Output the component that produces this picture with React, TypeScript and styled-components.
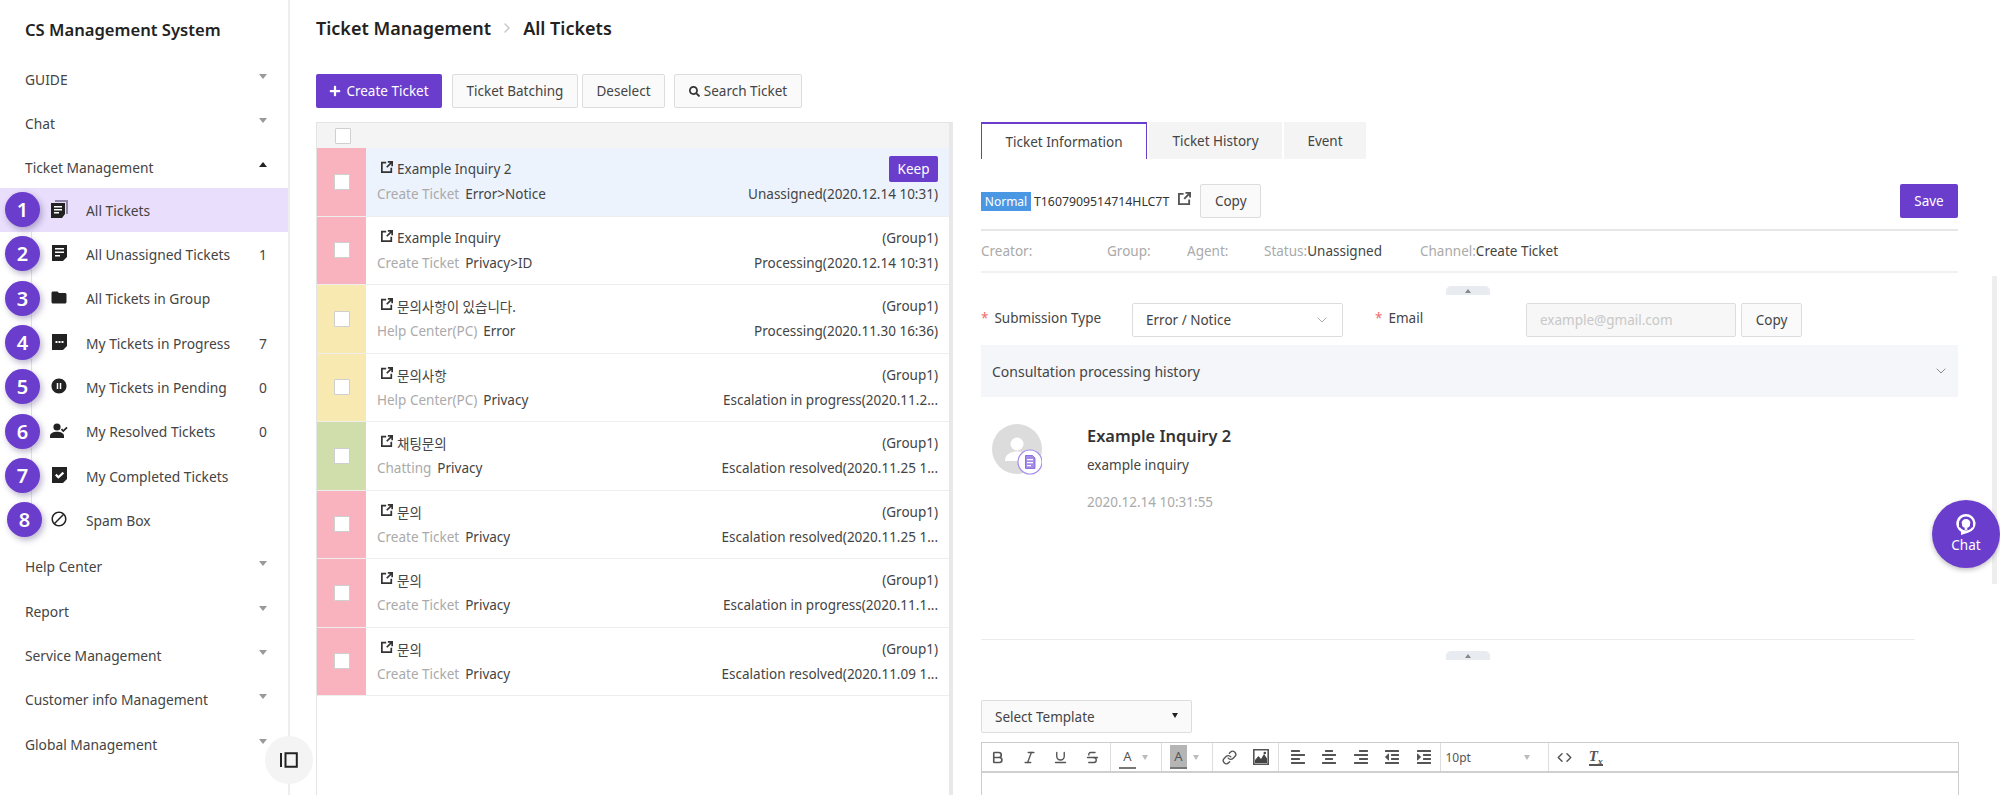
import styled, { createGlobalStyle } from "styled-components";
import { MdBlock, MdFolder, MdPauseCircleFilled } from "react-icons/md";
import {
  FaAlignCenter,
  FaAlignLeft,
  FaAlignRight,
  FaIndent,
  FaOutdent,
  FaPlus,
  FaSearch,
} from "react-icons/fa";
import {
  Bold,
  ChevronDown,
  ChevronRight,
  Code,
  Italic,
  Link,
  Strikethrough,
  Underline,
} from "lucide-react";

const purple = "#6a3dcc";

const GlobalStyle = createGlobalStyle`
  html, body {
    margin: 0;
    padding: 0;
    background: #fff;
  }
  body {
    font-family: "Noto Sans", "Noto Sans CJK KR", sans-serif;
    font-size: 14px;
    color: #333;
  }
  * {
    box-sizing: border-box;
  }
`;

const DocIcon = ({ stacked, dots, check }: { stacked?: boolean; dots?: boolean; check?: boolean }) => (
  <svg width="17" height="18" viewBox="0 0 17 18">
    {stacked && <path d="M4 0h13v14h-2V2H4z" fill="#8f84a8" />}
    <path d={stacked ? "M0 3h14v11l-3 4H0z" : "M1 1h15v12l-4 4H1z"} fill="#222" />
    {!dots && !check && (
      <path d={stacked ? "M3 6h8v1.6H3zM3 9h8v1.6H3zM3 12h5v1.6H3z" : "M4 4h9v1.6H4zM4 7.5h9v1.6H4zM4 11h5v1.6H4z"} fill="#fff" />
    )}
    {dots && <path d="M4.5 8h2v2h-2zM7.5 8h2v2h-2zM10.5 8h2v2h-2z" fill="#fff" />}
    {check && <path d="M4.8 8.6l2.6 2.6 5-4.6" stroke="#fff" strokeWidth="2.2" fill="none" />}
  </svg>
);

const PersonCheckIcon = () => (
  <svg width="18" height="16" viewBox="0 0 18 16">
    <circle cx="7" cy="4" r="3.6" fill="#222" />
    <path d="M0 15v-2c0-2.8 3.6-4.2 7-4.2s7 1.4 7 4.2v2z" fill="#222" />
    <path d="M11.5 6.2l1.8 1.8 3.7-3.6" stroke="#222" strokeWidth="1.7" fill="none" />
  </svg>
);

const LaunchIcon = ({ size = 12, color = "#333" }: { size?: number; color?: string }) => (
  <svg width={size} height={size} viewBox="0 0 14 14">
    <path d="M0 1h6v2H2v9h9V8h2v6H0z" fill={color} />
    <path d="M8 0h6v6h-2V3.4L7.4 8 6 6.6 10.6 2H8z" fill={color} />
  </svg>
);

const ImageIcon = () => (
  <svg width="16" height="16" viewBox="0 0 16 16">
    <path d="M.8.8h14.4v14.4H.8z" fill="#fff" stroke="#555" strokeWidth="1.6" />
    <path d="M2 14V11l3.5-4 2.5 3 3-5 3 4.5V14z" fill="#444" />
    <circle cx="11.8" cy="4" r="1.3" fill="#444" />
  </svg>
);

const AvatarArt = () => (
  <svg width="50" height="51" viewBox="0 0 50 51">
    <circle cx="25" cy="25" r="25" fill="#dcdcdc" />
    <circle cx="25" cy="20" r="6.5" fill="#fff" />
    <path d="M13 37c0-7 6-9.500 12-9.500s12 2.500 12 9.500z" fill="#fff" />
    <circle cx="38" cy="38" r="12" fill="#fff" stroke="#a88cec" strokeWidth="1.2" />
    <path d="M33.500 31.500h7l2.500 2.500v10.500h-9.500z" fill="#a58be8" stroke="#7d5cd8" strokeWidth="0.8" />
    <path d="M35 35h6v1.200h-6zM35 38h6v1.200h-6zM35 41h4v1.200h-4z" fill="#fff" />
  </svg>
);

const ChatArt = () => (
  <svg width="24" height="21" viewBox="0 0 24 21">
    <path d="M12 0a9.500 9.500 0 0 1 2 18.800L7 21v-3.300A9.500 9.500 0 0 1 12 0z" fill="#fff" />
    <circle cx="12" cy="9.500" r="5.800" fill="none" stroke={purple} strokeWidth="2.600" />
    <rect x="5" y="9" width="3" height="4.500" rx="1.200" fill={purple} />
    <rect x="16" y="9" width="3" height="4.500" rx="1.200" fill={purple} />
    <rect x="10.500" y="14" width="3" height="2" rx="1" fill="#fff" />
  </svg>
);

const topMenus = ["GUIDE", "Chat"];
const bottomMenus = ["Help Center", "Report", "Service Management", "Customer info Management", "Global Management"];

const subMenus = [
  { label: "All Tickets", icon: <DocIcon stacked />, active: true },
  { label: "All Unassigned Tickets", icon: <DocIcon />, count: "1" },
  { label: "All Tickets in Group", icon: <MdFolder size={19} color="#222" /> },
  { label: "My Tickets in Progress", icon: <DocIcon dots />, count: "7" },
  { label: "My Tickets in Pending", icon: <MdPauseCircleFilled size={22} color="#222" />, count: "0" },
  { label: "My Resolved Tickets", icon: <PersonCheckIcon />, count: "0" },
  { label: "My Completed Tickets", icon: <DocIcon check /> },
  { label: "Spam Box", icon: <MdBlock size={22} color="#222" />, shifted: true },
];

const tickets = [
  { color: "#f9b3bf", title: "Example Inquiry 2", source: "Create Ticket", type: "Error>Notice", status: "Unassigned(2020.12.14 10:31)", selected: true },
  { color: "#f9b3bf", title: "Example Inquiry", source: "Create Ticket", type: "Privacy>ID", status: "Processing(2020.12.14 10:31)" },
  { color: "#f7e9b0", title: "문의사항이 있습니다.", source: "Help Center(PC)", type: "Error", status: "Processing(2020.11.30 16:36)" },
  { color: "#f7e9b0", title: "문의사항", source: "Help Center(PC)", type: "Privacy", status: "Escalation in progress(2020.11.2..." },
  { color: "#cfdeaa", title: "채팅문의", source: "Chatting", type: "Privacy", status: "Escalation resolved(2020.11.25 1..." },
  { color: "#f9b3bf", title: "문의", source: "Create Ticket", type: "Privacy", status: "Escalation resolved(2020.11.25 1..." },
  { color: "#f9b3bf", title: "문의", source: "Create Ticket", type: "Privacy", status: "Escalation in progress(2020.11.1..." },
  { color: "#f9b3bf", title: "문의", source: "Create Ticket", type: "Privacy", status: "Escalation resolved(2020.11.09 1..." },
];

export default function App() {
  return (
    <Page>
      <GlobalStyle />
      <Sidebar>
        <Brand>CS Management System</Brand>
        {topMenus.map((m) => (
          <MenuRow key={m}>
            {m}
            <Caret />
          </MenuRow>
        ))}
        <MenuRow>
          Ticket Management
          <Caret $up />
        </MenuRow>
        <SubMenu>
          <TreeLine />
          {subMenus.map((s, i) => (
            <SubRow key={s.label} $active={s.active}>
              <StepBadge $shifted={s.shifted}>{i + 1}</StepBadge>
              <SubIcon>{s.icon}</SubIcon>
              <SubLabel>{s.label}</SubLabel>
              {s.count && <Count>{s.count}</Count>}
            </SubRow>
          ))}
        </SubMenu>
        <BottomMenus>
          {bottomMenus.map((m) => (
            <MenuRow key={m}>
              {m}
              <Caret />
            </MenuRow>
          ))}
        </BottomMenus>
        <CollapseButton>
          <svg width="18" height="16" viewBox="0 0 18 16">
            <path d="M1 1v14M5.500 1.200h11.300v13.600H5.500z" stroke="#222" strokeWidth="2" fill="none" />
          </svg>
        </CollapseButton>
      </Sidebar>

      <Main>
        <Breadcrumb>
          <span>Ticket Management</span>
          <ChevronRight size={16} color="#c4c4c4" />
          <span>All Tickets</span>
        </Breadcrumb>
        <Columns>
          <ListColumn>
            <Toolbar>
              <PrimaryButton>
                <FaPlus size={12} />
                Create Ticket
              </PrimaryButton>
              <GhostButton $w={126}>Ticket Batching</GhostButton>
              <GhostButton $w={83}>Deselect</GhostButton>
              <SearchButton>
                <FaSearch size={11} color="#333" />
                Search Ticket
              </SearchButton>
            </Toolbar>
            <ListBox>
              <ListHead>
                <Check />
              </ListHead>
              {tickets.map((t, i) => (
                <TicketRow key={i} $selected={t.selected}>
                  <ColorCell $color={t.color}>
                    <Check />
                  </ColorCell>
                  <TicketBody>
                    <TicketLine $first>
                      <TicketTitle>
                        <LaunchIcon />
                        {t.title}
                      </TicketTitle>
                      {t.selected ? <KeepButton>Keep</KeepButton> : <span>(Group1)</span>}
                    </TicketLine>
                    <TicketLine>
                      <span>
                        <Muted>{t.source}</Muted>
                        <TypeText>{t.type}</TypeText>
                      </span>
                      <span>{t.status}</span>
                    </TicketLine>
                  </TicketBody>
                </TicketRow>
              ))}
            </ListBox>
          </ListColumn>

          <DetailColumn>
            <Tabs>
              <Tab $active $w={166}>Ticket Information</Tab>
              <Tab $w={133}>Ticket History</Tab>
              <Tab $w={82}>Event</Tab>
            </Tabs>
            <IdRow>
              <NormalTag>Normal</NormalTag>
              <TicketId>T1607909514714HLC7T</TicketId>
              <LaunchIcon size={13} color="#555" />
              <CopyButton>Copy</CopyButton>
              <SaveButton>Save</SaveButton>
            </IdRow>
            <InfoRow>
              <InfoItem $w={126}><Muted>Creator:</Muted></InfoItem>
              <InfoItem $w={80}><Muted>Group:</Muted></InfoItem>
              <InfoItem $w={77}><Muted>Agent:</Muted></InfoItem>
              <InfoItem $w={156}><Muted>Status:</Muted>Unassigned</InfoItem>
              <InfoItem><Muted>Channel:</Muted>Create Ticket</InfoItem>
            </InfoRow>
            <Handle $top={13}>
              <HandleArrow />
            </Handle>
            <FormRow>
              <FieldLabel $w={151}><Star>*</Star>Submission Type</FieldLabel>
              <SelectBox>
                Error / Notice
                <ChevronDown size={16} color="#aaa" strokeWidth={1.5} />
              </SelectBox>
              <FieldLabel $w={151} $ml={32}><Star>*</Star>Email</FieldLabel>
              <EmailInput>example@gmail.com</EmailInput>
              <CopyButton $ml={5}>Copy</CopyButton>
            </FormRow>
            <Accordion>
              Consultation processing history
              <ChevronDown size={16} color="#888" strokeWidth={1.5} />
            </Accordion>
            <HistoryItem>
              <AvatarArt />
              <HistoryText>
                <HistoryTitle>Example Inquiry 2</HistoryTitle>
                <HistoryBody>example inquiry</HistoryBody>
                <HistoryDate>2020.12.14 10:31:55</HistoryDate>
              </HistoryText>
            </HistoryItem>
            <SoftDivider />
            <Handle $top={11}>
              <HandleArrow />
            </Handle>
            <TemplateSelect>
              Select Template
              <BlackCaret />
            </TemplateSelect>
            <Editor>
              <EditorBar>
                <ToolGroup $w={129}>
                  <ToolBtn><Bold size={15} strokeWidth={2.6} /></ToolBtn>
                  <ToolBtn><Italic size={15} strokeWidth={2.2} /></ToolBtn>
                  <ToolBtn><Underline size={15} strokeWidth={2.2} /></ToolBtn>
                  <ToolBtn><Strikethrough size={15} strokeWidth={2.2} /></ToolBtn>
                </ToolGroup>
                <ToolGroup $w={51} $pl={8}>
                  <ColorA>A</ColorA>
                  <SmallCaret />
                </ToolGroup>
                <ToolGroup $w={51} $pl={8}>
                  <ColorA $filled>A</ColorA>
                  <SmallCaret />
                </ToolGroup>
                <ToolGroup $w={66} $pl={1}>
                  <ToolBtn><Link size={15} strokeWidth={2.2} /></ToolBtn>
                  <ToolBtn><ImageIcon /></ToolBtn>
                </ToolGroup>
                <ToolGroup $w={161} $pl={3}>
                  <ToolBtn><FaAlignLeft size={16} /></ToolBtn>
                  <ToolBtn><FaAlignCenter size={16} /></ToolBtn>
                  <ToolBtn><FaAlignRight size={16} /></ToolBtn>
                  <ToolBtn><FaOutdent size={16} /></ToolBtn>
                  <ToolBtn><FaIndent size={16} /></ToolBtn>
                </ToolGroup>
                <FontSizeGroup $w={108} $pl={5}>
                  10pt
                  <SmallCaret />
                </FontSizeGroup>
                <ToolGroup $plain>
                  <ToolBtn><Code size={15} strokeWidth={2.4} /></ToolBtn>
                  <ToolBtn>
                    <ClearFormat>T<sub>x</sub></ClearFormat>
                  </ToolBtn>
                </ToolGroup>
              </EditorBar>
              <EditorArea />
            </Editor>
            <DetailScroll />
          </DetailColumn>
        </Columns>
      </Main>

      <ChatButton>
        <ChatArt />
        Chat
      </ChatButton>
    </Page>
  );
}

const Page = styled.div`
  position: relative;
  display: flex;
  width: 2000px;
  height: 795px;
  overflow: hidden;
`;

const Sidebar = styled.aside`
  position: relative;
  flex: 0 0 290px;
  border-right: 2px solid #eeeeee;
  color: #444;
`;

const Brand = styled.div`
  height: 57px;
  padding: 17px 0 0 25px;
  font-size: 16.6px;
  line-height: 26px;
  font-weight: 600;
  color: #222;
`;

const MenuRow = styled.div`
  display: flex;
  align-items: center;
  justify-content: space-between;
  height: 44.33px;
  padding: 0 21px 0 25px;
  font-size: 13.8px;
  color: #444;
`;

const Caret = styled.span<{ $up?: boolean }>`
  width: 0;
  height: 0;
  margin-top: -6px;
  border-left: 4px solid transparent;
  border-right: 4px solid transparent;
  ${(p) => (p.$up ? "border-bottom: 5px solid #222;" : "border-top: 5px solid #999;")}
`;

const SubMenu = styled.div`
  position: relative;
  margin-top: -2px;
`;

const TreeLine = styled.div`
  position: absolute;
  left: 31px;
  top: 44px;
  width: 1px;
  height: 300px;
  background: #e4e4e4;
`;

const SubRow = styled.div<{ $active?: boolean }>`
  position: relative;
  display: flex;
  align-items: center;
  height: 44.33px;
  padding: 0 21px 0 50px;
  background: ${(p) => (p.$active ? "#e9defc" : "transparent")};
`;

const StepBadge = styled.span<{ $shifted?: boolean }>`
  position: absolute;
  left: ${(p) => (p.$shifted ? 7 : 5)}px;
  top: 4px;
  width: 35px;
  height: 35px;
  display: flex;
  align-items: center;
  justify-content: center;
  border-radius: 50%;
  background: ${purple};
  color: #fff;
  font-size: 20px;
  font-weight: 600;
  box-shadow: 2px 3px 6px rgba(60, 40, 110, 0.35);
`;

const SubIcon = styled.span`
  display: flex;
  align-items: center;
  justify-content: center;
  width: 18px;
  margin-right: 18px;
  margin-top: -2px;
`;

const SubLabel = styled.span`
  flex: 1;
  font-size: 13.8px;
  color: #444;
`;

const Count = styled.span`
  font-size: 13.8px;
  color: #444;
`;

const BottomMenus = styled.div`
  padding-top: 2px;
`;

const CollapseButton = styled.div`
  position: absolute;
  left: 265px;
  top: 736px;
  width: 48px;
  height: 48px;
  display: flex;
  align-items: center;
  justify-content: center;
  border-radius: 50%;
  background: #f4f4f4;
  z-index: 2;
`;

const Main = styled.main`
  flex: 1;
  min-width: 0;
  padding-left: 26px;
`;

const Breadcrumb = styled.div`
  display: flex;
  align-items: center;
  gap: 8px;
  height: 74px;
  padding-bottom: 18px;
  font-size: 18px;
  font-weight: 600;
  color: #222;
`;

const Columns = styled.div`
  display: flex;
`;

const ListColumn = styled.section`
  flex: 0 0 637px;
`;

const Toolbar = styled.div`
  display: flex;
  align-items: center;
  height: 34px;
  margin-bottom: 14px;
`;

const PrimaryButton = styled.div`
  display: flex;
  align-items: center;
  justify-content: center;
  gap: 5px;
  width: 126px;
  height: 34px;
  margin-right: 10px;
  border-radius: 2px;
  background: ${purple};
  color: #fff;
  font-size: 13.5px;
`;

const GhostButton = styled.div<{ $w: number }>`
  display: flex;
  align-items: center;
  justify-content: center;
  width: ${(p) => p.$w}px;
  height: 34px;
  margin-right: 4px;
  border: 1px solid #dddddd;
  border-radius: 2px;
  background: #fafafa;
  color: #444;
  font-size: 13.5px;
`;

const SearchButton = styled(GhostButton).attrs({ $w: 128 })`
  gap: 4px;
  margin-left: 5px;
`;

const ListBox = styled.div`
  height: 700px;
  border-left: 1px solid #e4e4e4;
  border-right: 4px solid #e8e8e8;
  border-top: 1px solid #e4e4e4;
`;

const ListHead = styled.div`
  display: flex;
  align-items: center;
  height: 25px;
  padding-left: 18px;
  background: #f4f4f4;
`;

const Check = styled.span`
  display: block;
  width: 16px;
  height: 16px;
  border: 1px solid #cfcfcf;
  border-radius: 1px;
  background: #fff;
`;

const TicketRow = styled.div<{ $selected?: boolean }>`
  display: flex;
  height: 68.5px;
  border-bottom: 1px solid #eeeeee;
  background: ${(p) => (p.$selected ? "#ecf3fd" : "#fff")};
`;

const ColorCell = styled.div<{ $color: string }>`
  flex: 0 0 49px;
  display: flex;
  align-items: center;
  justify-content: center;
  background: ${(p) => p.$color};
`;

const TicketBody = styled.div`
  flex: 1;
  min-width: 0;
  display: flex;
  flex-direction: column;
  justify-content: center;
  gap: 2px;
  padding: 0 11px 3px 11px;
`;

const TicketLine = styled.div<{ $first?: boolean }>`
  display: flex;
  align-items: center;
  justify-content: space-between;
  height: ${(p) => (p.$first ? 26 : 20)}px;
  font-size: 13.5px;
  color: #444;
  white-space: nowrap;
`;

const TicketTitle = styled.span`
  display: flex;
  align-items: center;
  gap: 4px;
  padding-left: 4px;

  svg {
    margin-top: -4px;
  }
`;

const Muted = styled.span`
  color: #aaaaaa;
`;

const TypeText = styled.span`
  margin-left: 6px;
`;

const KeepButton = styled.span`
  display: flex;
  align-items: center;
  justify-content: center;
  width: 49px;
  height: 26px;
  border-radius: 2px;
  background: ${purple};
  color: #fff;
  font-size: 13.5px;
`;

const DetailColumn = styled.section`
  position: relative;
  flex: 1;
  min-width: 0;
  margin-top: 48px;
  margin-left: 28px;
  padding-right: 42px;
`;

const Tabs = styled.div`
  display: flex;
  gap: 2px;
  height: 37px;
`;

const Tab = styled.div<{ $active?: boolean; $w: number }>`
  display: flex;
  align-items: center;
  justify-content: center;
  width: ${(p) => p.$w}px;
  height: 37px;
  font-size: 13.5px;
  color: #444;
  background: ${(p) => (p.$active ? "#fff" : "#f4f4f4")};
  ${(p) => p.$active && `border: solid ${purple}; border-width: 2px 1px 0 1px;`}
`;

const IdRow = styled.div`
  display: flex;
  align-items: center;
  height: 47px;
  margin-top: 25px;
  padding-bottom: 11px;
  border-bottom: 2px solid #e6e6e6;
`;

const NormalTag = styled.span`
  display: flex;
  align-items: center;
  justify-content: center;
  width: 50px;
  height: 19px;
  margin-right: 3px;
  background: #4a97e3;
  color: #fff;
  font-size: 12px;
`;

const TicketId = styled.span`
  margin-right: 9px;
  font-size: 12.3px;
  color: #333;

  & + svg {
    margin-top: -6px;
  }
`;

const CopyButton = styled.div<{ $ml?: number }>`
  display: flex;
  align-items: center;
  justify-content: center;
  width: 61px;
  height: 34px;
  margin-left: ${(p) => p.$ml ?? 9}px;
  border: 1px solid #dddddd;
  border-radius: 2px;
  background: #fafafa;
  color: #444;
  font-size: 13.5px;
`;

const SaveButton = styled.div`
  display: flex;
  align-items: center;
  justify-content: center;
  width: 58px;
  height: 34px;
  margin-left: auto;
  border-radius: 2px;
  background: ${purple};
  color: #fff;
  font-size: 13.5px;
`;

const InfoRow = styled.div`
  display: flex;
  align-items: center;
  height: 42px;
  border-bottom: 2px solid #f1f1f1;
  font-size: 13.5px;
  color: #444;
`;

const InfoItem = styled.div<{ $w?: number }>`
  ${(p) => (p.$w ? `flex: 0 0 ${p.$w}px;` : "")}
`;

const Handle = styled.div<{ $top: number }>`
  width: 44px;
  height: 9px;
  margin: ${(p) => p.$top}px auto 0;
  position: relative;
  left: -2px;
  display: flex;
  align-items: center;
  justify-content: center;
  border-radius: 5px 5px 0 0;
  background: #e8ebf0;
`;

const HandleArrow = styled.span`
  width: 0;
  height: 0;
  border-left: 3px solid transparent;
  border-right: 3px solid transparent;
  border-bottom: 4px solid #888;
`;

const FormRow = styled.div`
  display: flex;
  align-items: center;
  height: 34px;
  margin-top: 8px;
`;

const FieldLabel = styled.div<{ $w: number; $ml?: number }>`
  flex: 0 0 ${(p) => p.$w}px;
  margin-left: ${(p) => p.$ml ?? 0}px;
  margin-top: -4px;
  font-size: 13.5px;
  color: #444;
`;

const Star = styled.span`
  margin-right: 6px;
  color: #f06a6a;
`;

const SelectBox = styled.div`
  display: flex;
  align-items: center;
  justify-content: space-between;
  width: 211px;
  height: 34px;
  padding: 0 12px 0 13px;
  border: 1px solid #dddddd;
  border-radius: 2px;
  font-size: 13.5px;
  color: #444;
`;

const EmailInput = styled.div`
  display: flex;
  align-items: center;
  width: 210px;
  height: 34px;
  padding-left: 13px;
  border: 1px solid #dddddd;
  border-radius: 2px;
  background: #f7f7f7;
  font-size: 13.5px;
  color: #c8c8c8;
`;

const Accordion = styled.div`
  display: flex;
  align-items: center;
  justify-content: space-between;
  height: 52px;
  margin-top: 8px;
  padding: 0 9px 0 11px;
  background: #f4f6fa;
  font-size: 14px;
  color: #444;
`;

const HistoryItem = styled.div`
  display: flex;
  gap: 45px;
  height: 242px;
  padding: 27px 0 0 11px;
`;

const HistoryText = styled.div`
  display: flex;
  flex-direction: column;
`;

const HistoryTitle = styled.div`
  height: 31px;
  font-size: 16.4px;
  line-height: 24px;
  font-weight: 600;
  color: #333;
`;

const HistoryBody = styled.div`
  height: 37px;
  font-size: 13.5px;
  line-height: 20px;
  color: #444;
`;

const HistoryDate = styled.div`
  font-size: 13.5px;
  line-height: 20px;
  color: #aaaaaa;
`;

const SoftDivider = styled.div`
  width: 934px;
  height: 1px;
  background: #ececec;
`;

const TemplateSelect = styled.div`
  display: flex;
  align-items: center;
  justify-content: space-between;
  width: 211px;
  height: 33px;
  margin-top: 40px;
  padding: 0 13px;
  border: 1px solid #dddddd;
  border-radius: 2px;
  background: #fafafa;
  font-size: 13.5px;
  color: #444;
`;

const BlackCaret = styled.span`
  width: 0;
  height: 0;
  margin-top: -3px;
  border-left: 3.5px solid transparent;
  border-right: 3.5px solid transparent;
  border-top: 5px solid #222;
`;

const Editor = styled.div`
  width: 978px;
  height: 70px;
  margin-top: 9px;
  border: 1px solid #cccccc;
  border-bottom: none;
`;

const EditorBar = styled.div`
  display: flex;
  align-items: stretch;
  height: 30px;
  border-bottom: 2px solid #cfcfcf;
  color: #555;
`;

const ToolGroup = styled.div<{ $plain?: boolean; $w?: number; $pl?: number }>`
  display: flex;
  align-items: center;
  ${(p) => (p.$w ? `flex: 0 0 ${p.$w}px;` : "")}
  padding-left: ${(p) => p.$pl ?? 0}px;
  border-right: ${(p) => (p.$plain ? "none" : "1px solid #dddddd")};
`;

const ToolBtn = styled.span`
  display: flex;
  align-items: center;
  justify-content: center;
  width: 31.5px;
  height: 28px;
  color: #555;
`;

const ColorA = styled.span<{ $filled?: boolean }>`
  display: flex;
  align-items: center;
  justify-content: center;
  width: 17px;
  height: 24px;
  border-bottom: 2px solid #777;
  background: ${(p) => (p.$filled ? "#b5b5b5" : "transparent")};
  font-size: 13px;
  color: #555;
`;

const SmallCaret = styled.span`
  width: 0;
  height: 0;
  margin-left: 6px;
  margin-right: 5px;
  border-left: 3.5px solid transparent;
  border-right: 3.5px solid transparent;
  border-top: 5px solid #bbb;
`;

const FontSizeGroup = styled(ToolGroup)`
  justify-content: space-between;
  padding-right: 13px;
  font-size: 12px;
  color: #555;
`;

const ClearFormat = styled.span`
  font-family: "Liberation Serif", serif;
  font-style: italic;
  font-weight: 700;
  font-size: 15px;
  line-height: 16px;
  color: #555;
  border-bottom: 2px solid #555;

  sub {
    font-size: 10px;
    line-height: 0;
  }
`;

const EditorArea = styled.div`
  height: 40px;
`;

const DetailScroll = styled.div`
  position: absolute;
  right: 3px;
  top: 154px;
  width: 5px;
  height: 308px;
  background: #eeeeee;
`;

const ChatButton = styled.div`
  position: absolute;
  right: 0;
  top: 500px;
  width: 68px;
  height: 68px;
  display: flex;
  flex-direction: column;
  align-items: center;
  justify-content: center;
  gap: 1px;
  border-radius: 50%;
  background: ${purple};
  color: #fff;
  font-size: 13.5px;
  line-height: 18px;
  box-shadow: 0 2px 5px rgba(0, 0, 0, 0.25);
`;
